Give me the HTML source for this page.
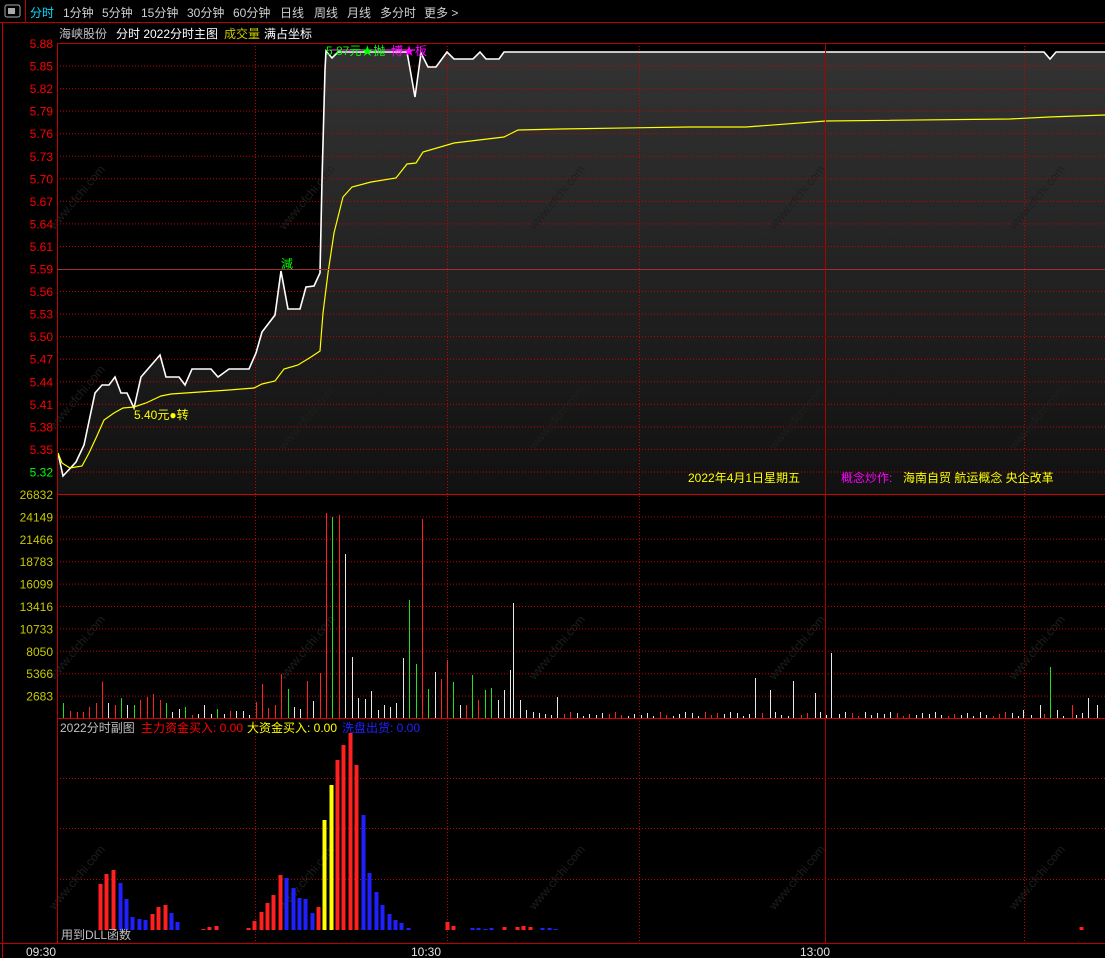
<!DOCTYPE html>
<html><head><meta charset="utf-8">
<style>
html,body{margin:0;padding:0;background:#000;width:1105px;height:958px;overflow:hidden}
svg{display:block}
text{font-family:"Liberation Sans","Noto Sans CJK SC",sans-serif;font-size:12px}
</style></head>
<body>
<svg id="s" width="1105" height="958" xmlns="http://www.w3.org/2000/svg">
<defs>
<linearGradient id="g" x1="0" y1="0" x2="0" y2="1">
<stop offset="0" stop-color="#333"/><stop offset="1" stop-color="#111"/>
</linearGradient>
</defs>
<rect width="1105" height="958" fill="#000"/>
<rect x="5" y="5" width="15" height="12" rx="2" fill="none" stroke="#aaa"/>
<rect x="8" y="8" width="7" height="6" fill="#aaa"/>
<line x1="25.5" y1="0" x2="25.5" y2="22" stroke="#c00000"/>
<line x1="0" y1="22.5" x2="1105" y2="22.5" stroke="#c00000"/>
<g fill="#d0d0d0">
<text x="30" y="17" fill="#00e0ff">分时</text>
<text x="63" y="17">1分钟</text><text x="102" y="17">5分钟</text>
<text x="141" y="17">15分钟</text><text x="187" y="17">30分钟</text>
<text x="233" y="17">60分钟</text><text x="280" y="17">日线</text>
<text x="314" y="17">周线</text><text x="347" y="17">月线</text>
<text x="380" y="17">多分时</text><text x="424" y="17">更多 &gt;</text>
</g>
<line x1="2.5" y1="22" x2="2.5" y2="958" stroke="#c00000"/>
<text x="59" y="38" fill="#c0c0c0">海峡股份</text>
<text x="116" y="38" fill="#fff">分时 2022分时主图</text>
<text x="224" y="38" fill="#c8c800">成交量</text>
<text x="264" y="38" fill="#fff">满占坐标</text>
<g id="grid"></g>
<g id="wm"></g>
<g id="main"></g>
<g id="vol"></g>
<g id="sub"></g>
<line x1="57.5" y1="43" x2="57.5" y2="943" stroke="#c00000"/>
<line x1="57" y1="43.5" x2="1105" y2="43.5" stroke="#c00000"/>
<line x1="57" y1="269.5" x2="1105" y2="269.5" stroke="#a03030"/>
<line x1="57" y1="494.5" x2="1105" y2="494.5" stroke="#d00000"/>
<line x1="57" y1="718.5" x2="1105" y2="718.5" stroke="#d00000"/>
<line x1="0" y1="943.5" x2="1105" y2="943.5" stroke="#c00000"/>
<line x1="825.5" y1="43" x2="825.5" y2="943" stroke="#b00000"/>
<line x1="330" y1="50" x2="415" y2="50" stroke="#ff40ff"/>
<text x="326" y="55" fill="#00ff00">5.87元★抛</text>
<text x="391" y="55" fill="#ff00ff">博★板</text>
<text x="281" y="268" fill="#00ff00">減</text>
<text x="134" y="419" fill="#ffff00">5.40元●转</text>
<text x="688" y="482" fill="#ffff00">2022年4月1日星期五</text>
<text x="841" y="482" fill="#ff00ff">概念炒作:</text>
<text x="903" y="482" fill="#ffff00">海南自贸 航运概念 央企改革</text>
<text x="60" y="732" fill="#c0c0c0">2022分时副图</text>
<text x="141" y="732" fill="#ff0000">主力资金买入: 0.00</text>
<text x="247" y="732" fill="#ffff00">大资金买入: 0.00</text>
<text x="342" y="732" fill="#2020ff">洗盘出货: 0.00</text>
<text x="61" y="939" fill="#c0c0c0">用到DLL函数</text>
<g fill="#e0e0e0">
<text x="56" y="956" text-anchor="end">09:30</text>
<text x="441" y="956" text-anchor="end">10:30</text>
<text x="830" y="956" text-anchor="end">13:00</text>
</g>
<g id="labels"></g>
</svg>
<script>
var NS="http://www.w3.org/2000/svg";
function el(p,t,a,txt){var e=document.createElementNS(NS,t);for(var k in a)e.setAttribute(k,a[k]);if(txt!=null)e.textContent=txt;document.getElementById(p).appendChild(e);return e;}
var P=[[58,453],[63,476],[76,462],[84,445],[95,393],[102,385],[109,385],[115,377],[121,393],[127,393],[134,408],[141,377],[160,355],[166,377],[179,377],[185,385],[192,369],[211,369],[218,377],[229,369],[249,369],[256,353],[262,332],[275,315],[281,271],[288,309],[300,309],[306,287],[314,286],[320,273],[322,180],[325,70],[326,51],[332,58],[338,52],[407,52],[415,97],[421,53],[428,67],[436,67],[447,52],[454,59],[473,59],[480,52],[486,59],[499,59],[504,52],[1044,52],[1050,59],[1056,52],[1105,52]];
var d=P.map(function(p,i){return (i?"L":"M")+p[0]+" "+p[1];}).join("");
el("grid","path",{d:d+"L1105 494L58 494Z",fill:"url(#g)"});
var GS={stroke:"#c80000","stroke-dasharray":"1 2"};
function gl(a){for(var k in GS)a[k]=GS[k];el("grid","line",a);}
var pl=["5.88","5.85","5.82","5.79","5.76","5.73","5.70","5.67","5.64","5.61","5.59","5.56","5.53","5.50","5.47","5.44","5.41","5.38","5.35","5.32"];
for(var i=0;i<pl.length;i++){var y=43+i*22.55;
 if(i>0&&i!=10)gl({x1:57,x2:1105,y1:y+.5,y2:y+.5});
 el("labels","text",{x:53,y:y+5,"text-anchor":"end",fill:i==19?"#00ff00":"#ff0000"},pl[i]);}
var vl=["26832","24149","21466","18783","16099","13416","10733","8050","5366","2683"];
for(i=0;i<vl.length;i++){var y=494+i*22.4;
 if(i>0)gl({x1:57,x2:1105,y1:y+.5,y2:y+.5});
 el("labels","text",{x:53,y:y+5,"text-anchor":"end",fill:"#c8c800"},vl[i]);}
[778,828,879].forEach(function(y){gl({x1:57,x2:1105,y1:y+.5,y2:y+.5});});
[255,447,639,1024].forEach(function(x){gl({x1:x+.5,x2:x+.5,y1:43,y2:943});});
el("main","path",{d:d,fill:"none",stroke:"#fff","stroke-width":1.6});
var A=[[58,453],[62,463],[70,468],[82,466],[89,453],[96,438],[104,420],[114,413],[123,408],[134,407],[146,403],[161,396],[171,394],[200,392],[229,390],[254,388],[262,384],[275,381],[284,369],[298,365],[311,357],[320,351],[323,313],[328,273],[334,233],[343,197],[352,187],[371,182],[396,178],[407,164],[416,163],[423,152],[454,143],[504,137],[518,130],[560,129],[688,127],[746,127],[826,121],[1010,119],[1049,117],[1105,115]];
el("main","path",{d:A.map(function(p,i){return (i?"L":"M")+p[0]+" "+p[1];}).join(""),fill:"none",stroke:"#ffff00","stroke-width":1.2});
var C={r:"#ff2020",g:"#20e020",w:"#e8e8e8",b:"#2020ff",y:"#ffff00"};
var V=[[63,"g",669],[70,"r",693],[77,"r",696],[83,"r",696],[89,"r",681],[96,"r",669],[102,"r",605],[108,"w",669],[115,"r",675],[121,"g",654],[127,"w",675],[134,"g",675],[140,"r",660],[147,"r",651],[153,"r",642],[160,"r",660],[166,"g",669],[172,"w",696],[179,"w",687],[185,"g",681],[192,"r",705],[198,"w",702],[204,"w",675],[211,"w",702],[217,"g",687],[224,"w",702],[230,"r",693],[236,"w",693],[243,"w",693],[249,"w",705],[256,"r",666],[262,"r",612],[268,"r",684],[275,"r",675],[281,"r",582],[288,"g",627],[294,"w",681],[300,"w",687],[307,"r",603],[313,"w",663],[320,"r",579],[326,"r",99],[332,"g",111],[339,"r",105],[345,"w",222],[352,"w",531],[358,"w",654],[365,"w",657],[371,"w",633],[378,"w",690],[384,"w",675],[390,"w",681],[396,"w",669],[403,"w",534],[409,"g",360],[416,"g",552],[422,"r",117],[428,"g",627],[435,"w",576],[441,"r",597]];
V=V.map(function(v){return [v[0],v[1],480+v[2]/3];});
V=V.concat([[447,"r",660],[453,"g",682],[460,"w",705],[466,"r",705],[472,"g",675],[478,"r",700],[485,"g",690],[491,"g",688],[498,"w",700],[504,"w",690],[510,"w",670],[513,"w",603],[520,"w",700],[526,"w",710],[533,"w",712],[539,"w",713],[545,"w",714],[557,"w",697],[755,"w",678],[770,"w",690],[793,"w",681],[815,"w",693],[831,"w",653],[1023,"w",710],[1040,"w",705],[1050,"g",667],[1057,"w",710],[1072,"r",705],[1088,"w",698],[1097,"w",705]]);
var have={};V.forEach(function(v){have[Math.round(v[0])]=1;});
for(var x=551;x<1100;x+=6.4){var xr=Math.round(x),ok=true;for(var k=-3;k<=3;k++)if(have[xr+k])ok=false;if(ok)V.push([xr,(xr*7)%3==0?"r":"w",712+((xr*13)%5)]);}
V.forEach(function(v){el("vol","line",{x1:v[0]+.5,x2:v[0]+.5,y1:v[2],y2:718,stroke:C[v[1]],"stroke-width":1});});
var S=[[100,"r",884],[106,"r",874],[113,"r",870],[120,"b",883],[126,"b",899],[132,"b",917],[139,"b",919],[145,"b",920],[152,"r",914],[158,"r",907],[165,"r",905],[171,"b",913],[177,"b",922],[203,"r",929],[209,"r",927],[216,"r",926],[248,"r",928],[254,"r",921],[261,"r",912],[267,"r",903],[273,"r",895],[280,"r",875],[286,"b",878],[293,"b",888],[299,"b",898],[305,"b",899],[312,"b",913],[318,"r",907],[324,"y",820],[331,"y",785],[337,"r",760],[343,"r",745],[350,"r",733],[356,"r",765],[363,"b",815],[369,"b",873],[376,"b",892],[382,"b",905],[389,"b",914],[395,"b",920],[401,"b",923],[408,"b",928],[447,"r",922],[453,"r",926],[472,"b",928],[478,"b",928],[485,"b",929],[491,"b",928],[504,"r",927],[517,"r",927],[523,"r",926],[530,"r",927],[542,"b",928],[549,"b",928],[555,"b",929],[1081,"r",927]];
S.forEach(function(v){el("sub","rect",{x:v[0]-1.5,y:v[2],width:4,height:930-v[2],fill:C[v[1]]});});
[[80,200],[80,400],[80,650],[80,880],[310,200],[310,420],[310,650],[310,880],[560,200],[560,420],[560,650],[560,880],[800,200],[800,420],[800,650],[800,880],[1040,200],[1040,420],[1040,650],[1040,880]].forEach(function(p){el("wm","text",{x:p[0],y:p[1],transform:"rotate(-50 "+p[0]+" "+p[1]+")","text-anchor":"middle","font-size":"22",fill:"#1f1f1f"},"www.cfchi.com");});
</script>
</body></html>
